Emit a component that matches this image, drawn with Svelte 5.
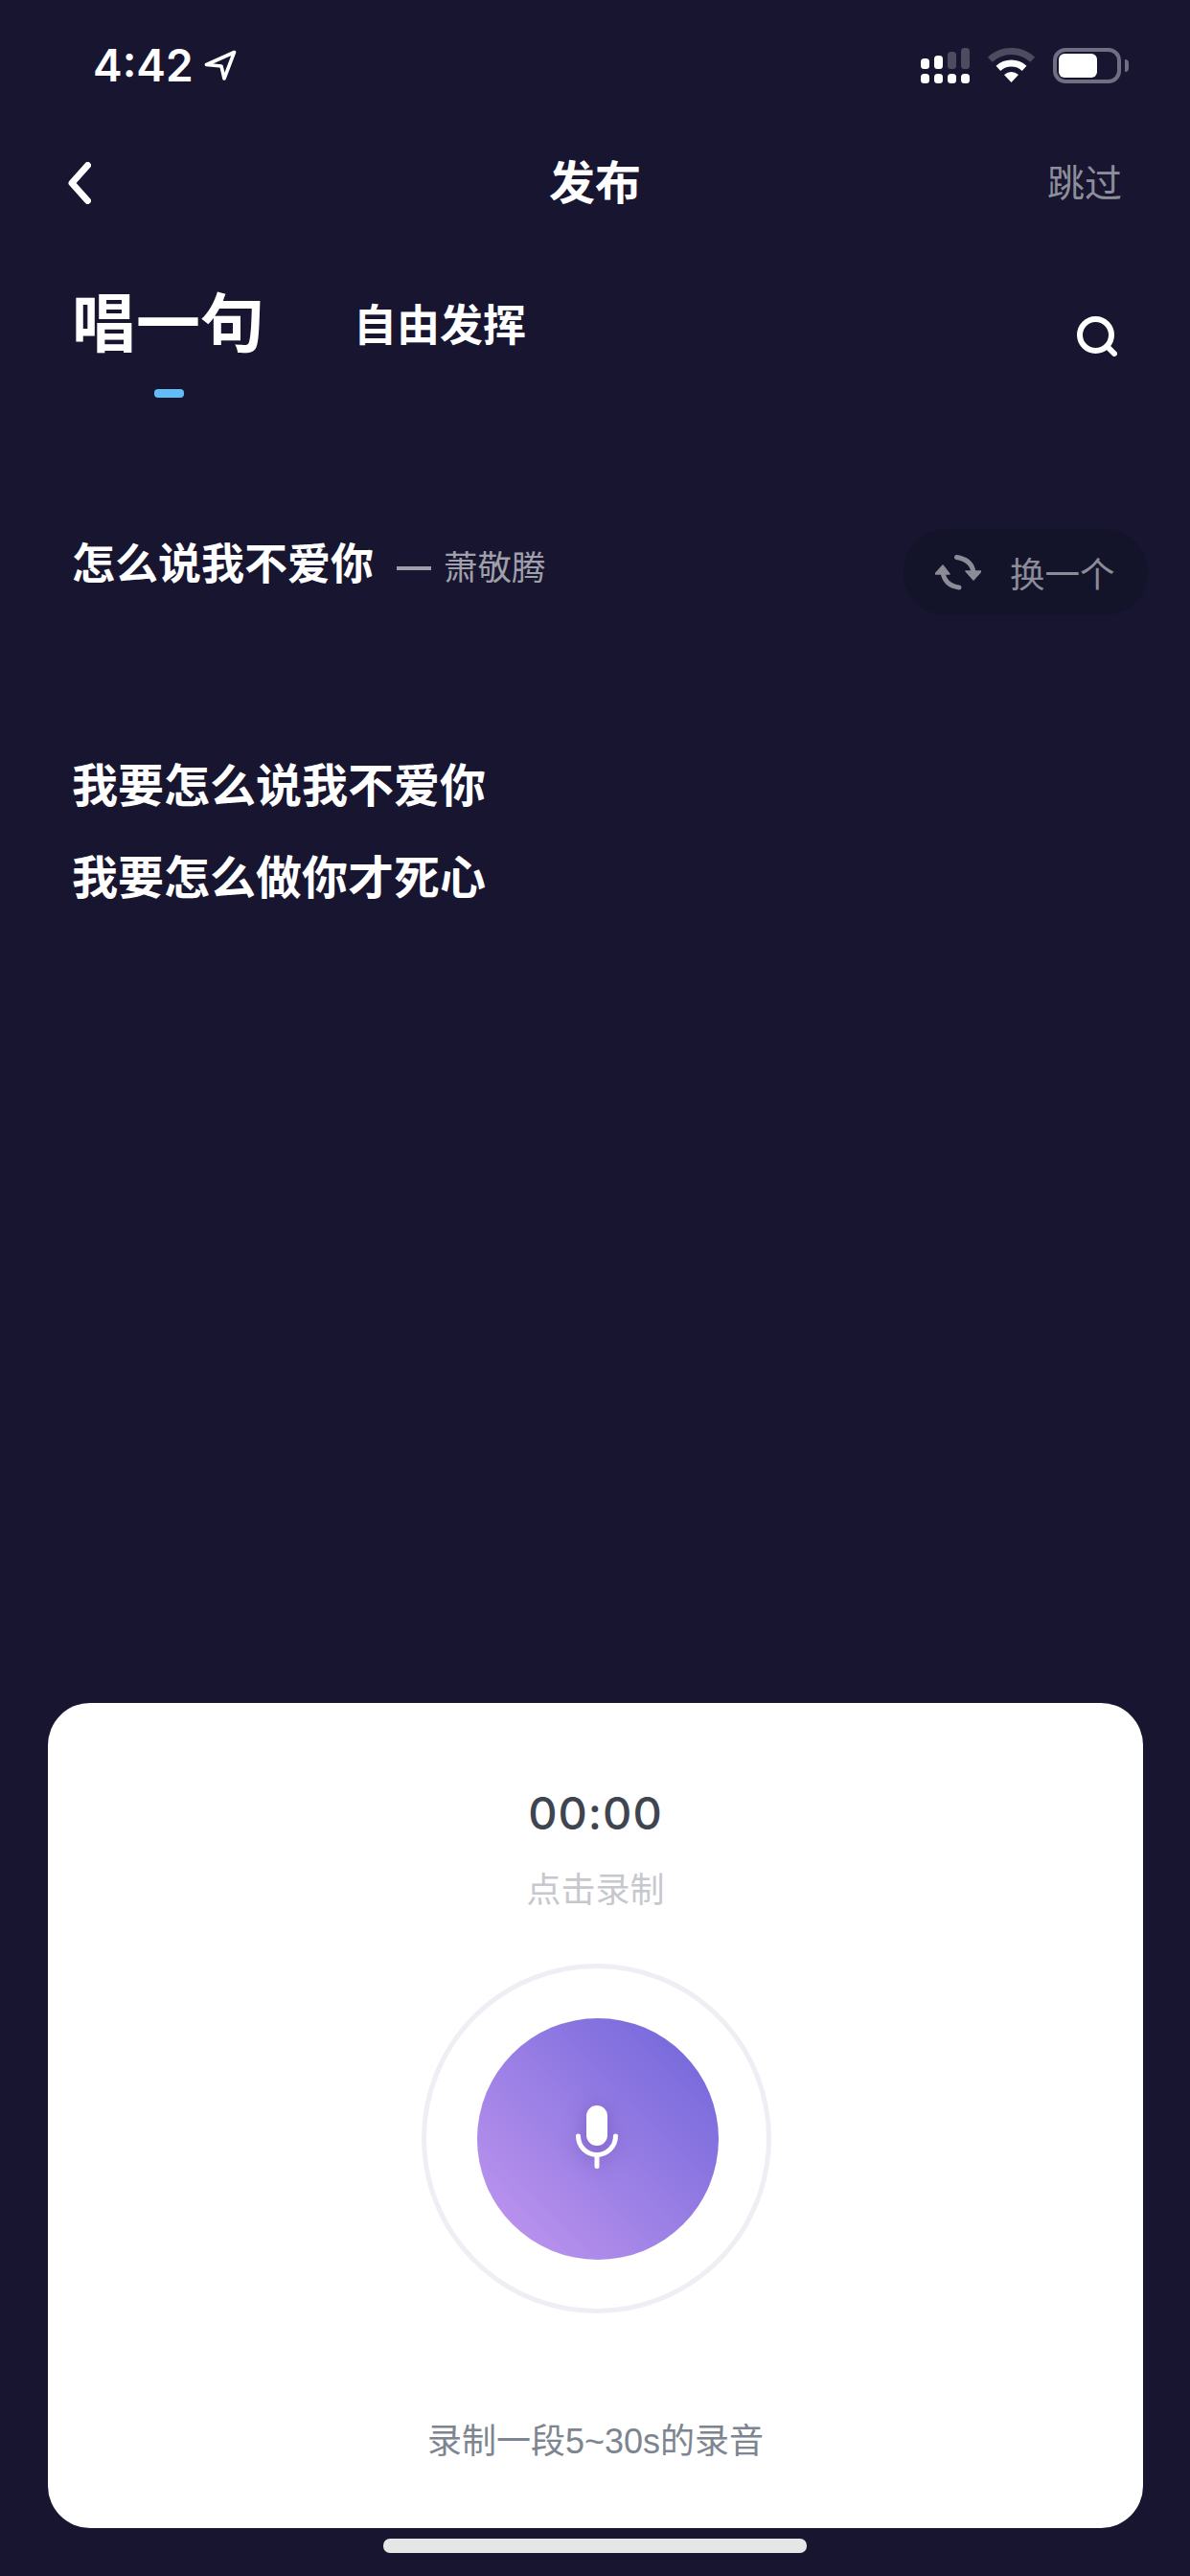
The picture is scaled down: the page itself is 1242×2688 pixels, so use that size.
<script lang="ts">
  const lyrics = ["我要怎么说我不爱你", "我要怎么做你才死心"]
  let elapsed = $state("00:00")
</script>

<main class="page">
  <header class="status">
    <div class="clock">
      <span class="time">4:42</span>
      <svg class="loc" viewBox="0 0 34 32" aria-hidden="true">
        <path d="M31.5 2.5 L2.5 15.5 L18 17 L21 30 Z" fill="none" stroke="#fff" stroke-width="3.6" stroke-linejoin="round" />
      </svg>
    </div>
    <div class="indicators">
      <svg class="signal" viewBox="0 0 51 37" aria-hidden="true">
        <rect x="0" y="11" width="9" height="11" rx="3.5" fill="#fff" />
        <rect x="14" y="8" width="9" height="14" rx="3.5" fill="#fff" />
        <rect x="28" y="4" width="9" height="18" rx="3.5" fill="#4c4b60" />
        <rect x="42" y="0" width="9" height="22" rx="3.5" fill="#4c4b60" />
        <rect x="0" y="27" width="9" height="10" rx="3.5" fill="#fff" />
        <rect x="14" y="27" width="9" height="10" rx="3.5" fill="#fff" />
        <rect x="28" y="27" width="9" height="10" rx="3.5" fill="#fff" />
        <rect x="42" y="27" width="9" height="10" rx="3.5" fill="#fff" />
      </svg>
      <svg class="wifi" viewBox="0 0 49 36" aria-hidden="true">
        <path d="M2.3 12.2 A32.5 32.5 0 0 1 46.7 12.2" fill="none" stroke="#4c4b60" stroke-width="7" />
        <path d="M10.9 21.4 A20 20 0 0 1 38.1 21.4" fill="none" stroke="#fff" stroke-width="7" />
        <path d="M24.5 36 L17 28 Q24.5 22 32 28 Z" fill="#fff" />
      </svg>
      <div class="battery">
        <div class="battery-body"><div class="battery-level"></div></div>
        <div class="battery-nub"></div>
      </div>
    </div>
  </header>

  <nav class="nav">
    <button type="button" class="back" aria-label="返回">
      <svg viewBox="0 0 24 44" aria-hidden="true">
        <path d="M20.5 3.5 L4 22 L20.5 40.5" fill="none" stroke="#fff" stroke-width="7" stroke-linecap="round" stroke-linejoin="round" />
      </svg>
    </button>
    <h1>发布</h1>
    <button type="button" class="skip">跳过</button>
  </nav>

  <div class="tabs">
    <div class="tab tab-active">
      <span>唱一句</span>
      <i class="tab-mark"></i>
    </div>
    <div class="tab">自由发挥</div>
    <button type="button" class="search" aria-label="搜索">
      <svg viewBox="0 0 42 42" aria-hidden="true">
        <circle cx="19.5" cy="19.5" r="16.5" fill="none" stroke="#fff" stroke-width="6" />
        <path d="M32 32 L39 39" stroke="#fff" stroke-width="6" stroke-linecap="round" />
      </svg>
    </button>
  </div>

  <section class="song">
    <div class="song-title">
      <strong>怎么说我不爱你</strong>
      <span class="artist"><span class="dash"></span>萧敬腾</span>
    </div>
    <button type="button" class="swap">
      <svg viewBox="0 0 48 37" aria-hidden="true">
        <path d="M22.5 2.5 Q38 5 40 18 M25 34 Q10 32 8 18" fill="none" stroke="#8c8c99" stroke-width="5" stroke-linecap="round" />
        <path d="M32 17 H48 L40 26 Z M0 20 H15 L8 11 Z" fill="#8c8c99" stroke="#8c8c99" stroke-width="1.5" stroke-linejoin="round" />
      </svg>
      <span>换一个</span>
    </button>
  </section>

  <section class="lyrics">
    {#each lyrics as line}
      <p>{line}</p>
    {/each}
  </section>

  <section class="card">
    <div class="timer">{elapsed}</div>
    <div class="hint">点击录制</div>
    <div class="ring">
      <button type="button" class="record" aria-label="点击录制">
        <svg class="mic" viewBox="0 0 44 66" aria-hidden="true">
          <rect x="11" y="0" width="22" height="42" rx="11" fill="#fff" />
          <path d="M2.5 32 A19.5 19.5 0 0 0 41.5 32 M22 52 V63.5" fill="none" stroke="#fff" stroke-width="5" stroke-linecap="round" />
        </svg>
      </button>
    </div>
    <div class="foot">录制一段5~30s的录音</div>
  </section>

  <div class="home-bar"></div>
</main>

<style>
  :global(body) {
    background: #171530;
  }

  .page {
    height: 2688px;
    display: flex;
    flex-direction: column;
    background: #171530;
    color: #fff;
    font-family: "Liberation Sans", "Noto Sans CJK SC", sans-serif;
    overflow: hidden;
  }

  button {
    padding: 0;
    border: 0;
    background: none;
    color: inherit;
    font: inherit;
  }

  .status {
    display: flex;
    align-items: center;
    justify-content: space-between;
    height: 50px;
    margin-top: 43px;
    padding: 0 64px 0 97px;
  }

  .clock {
    display: flex;
    align-items: center;
    gap: 11px;
  }

  .time {
    font-family: Inter, sans-serif;
    font-size: 46px;
    font-weight: 600;
    line-height: 50px;
  }

  .loc {
    width: 34px;
    height: 32px;
  }

  .indicators {
    display: flex;
    align-items: center;
  }

  .signal {
    width: 51px;
    height: 37px;
    margin-right: 19px;
  }

  .wifi {
    width: 49px;
    height: 36px;
    margin-right: 19px;
  }

  .battery {
    display: flex;
    align-items: center;
    gap: 4px;
  }

  .battery-body {
    box-sizing: border-box;
    width: 71px;
    height: 37px;
    padding: 2px;
    border: 4px solid #6f6e82;
    border-radius: 13px;
  }

  .battery-level {
    width: 40px;
    height: 25px;
    background: #fff;
    border-radius: 6px;
  }

  .battery-nub {
    width: 4px;
    height: 13px;
    background: #6f6e82;
    border-radius: 0 4px 4px 0;
  }

  .nav {
    display: grid;
    grid-template-columns: 1fr auto 1fr;
    align-items: center;
    height: 88px;
    margin-top: 54px;
    padding: 0 71px;
  }

  .back {
    justify-self: start;
    display: flex;
    width: 24px;
    height: 44px;
  }

  h1 {
    margin: 2px 0 0;
    font-size: 48px;
    font-weight: 700;
    line-height: 60px;
  }

  .skip {
    justify-self: end;
    padding-top: 2px;
    font-size: 39px;
    line-height: 60px;
    color: #8e8e9a;
  }

  .tabs {
    display: flex;
    align-items: flex-start;
    gap: 93px;
    margin-top: 63px;
    padding: 0 76px 0 75px;
  }

  .tab {
    padding-top: 3px;
    font-size: 45px;
    font-weight: 700;
    line-height: 80px;
  }

  .tab-active {
    display: flex;
    flex-direction: column;
    align-items: center;
    padding-top: 1px;
    font-size: 67px;
  }

  .tab-mark {
    width: 31px;
    height: 9px;
    margin: 27px 0 0 2px;
    background: #62bdf6;
    border-radius: 4px;
  }

  .search {
    display: flex;
    width: 42px;
    height: 42px;
    margin: 32px 0 0 auto;
  }

  .song {
    display: flex;
    align-items: flex-start;
    justify-content: space-between;
    margin-top: 137px;
    padding: 0 44px 0 75px;
  }

  .song-title {
    display: flex;
    align-items: center;
    padding-top: 5px;
    line-height: 60px;
  }

  .song-title strong {
    font-size: 45px;
    font-weight: 700;
  }

  .artist {
    display: flex;
    align-items: center;
    gap: 13px;
    margin-left: 24px;
    padding-top: 6px;
    font-size: 35.5px;
    color: #a0a0aa;
  }

  .dash {
    width: 36px;
    height: 4px;
    background: #a0a0aa;
  }

  .swap {
    display: flex;
    align-items: center;
    gap: 30px;
    box-sizing: border-box;
    width: 255px;
    height: 90px;
    padding-left: 33px;
    background: #13132a;
    border-radius: 45px;
    font-size: 36.5px;
    color: #8c8c99;
  }

  .swap svg {
    width: 48px;
    height: 37px;
    flex: none;
  }

  .lyrics {
    margin-top: 131px;
    padding-left: 75px;
  }

  .lyrics p {
    margin: 0;
    font-size: 48px;
    font-weight: 700;
    line-height: 96px;
  }

  .card {
    display: flex;
    flex-direction: column;
    align-items: center;
    box-sizing: border-box;
    height: 861px;
    margin: auto 49px 0 50px;
    padding-top: 85px;
    background: #fff;
    border-radius: 44px;
    text-align: center;
  }

  .timer {
    font-family: Inter, sans-serif;
    font-size: 47px;
    font-weight: 500;
    line-height: 60px;
    letter-spacing: 1px;
    color: #3f4550;
  }

  .hint {
    margin-top: 26px;
    font-size: 36px;
    line-height: 50px;
    color: #c6c8ce;
  }

  .ring {
    display: flex;
    align-items: center;
    justify-content: center;
    box-sizing: border-box;
    width: 365px;
    height: 365px;
    margin: 51px 0 0 2px;
    border: 5px solid #eeeef4;
    border-radius: 50%;
  }

  .record {
    display: flex;
    align-items: center;
    justify-content: center;
    width: 252px;
    height: 252px;
    margin-left: 3px;
    background: linear-gradient(45deg, #bd94ee 8%, #7468db 92%);
    border-radius: 50%;
  }

  .mic {
    width: 44px;
    height: 66px;
    margin: 0 3px 3px 0;
    filter: drop-shadow(0 2px 10px rgba(90, 60, 160, 0.45));
  }

  .foot {
    margin-top: 109px;
    font-size: 36px;
    line-height: 50px;
    color: #7d8590;
  }

  .home-bar {
    flex: none;
    width: 442px;
    height: 15px;
    margin: 11px auto 24px;
    background: #e6e6e6;
    border-radius: 7px;
  }
</style>
